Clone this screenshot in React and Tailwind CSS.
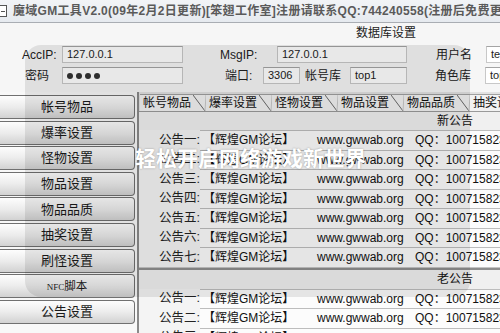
import React from "react";

const F = "font-['Liberation_Sans','Noto_Sans_CJK_SC',sans-serif]";

const buttons = ["帐号物品", "爆率设置", "怪物设置", "物品设置", "物品品质", "抽奖设置", "刷怪设置", "NPC", "公告设置"];
const tabs = ["帐号物品", "爆率设置", "怪物设置", "物品设置", "物品品质", "抽奖设置"];
const nums = ["一", "二", "三", "四", "五", "六", "七"];

function Input({ w, children, cls = "" }) {
  return (
    <div className={`h-[17px] shrink-0 bg-white border border-[#c8c8c8] border-t-[#a4a4a4] flex items-center pl-[4px] text-[11px] text-[#222] overflow-hidden whitespace-nowrap ${cls}`} style={{ width: w }}>
      {children}
    </div>
  );
}

function Row({ n }) {
  return (
    <div className="h-[19.5px] flex shrink-0">
      <div className="w-[61px] shrink-0 bg-[#f4f4f4] flex items-center justify-end text-[12.5px] text-[#222] leading-none">公告{n}:</div>
      <div className="flex-1 bg-[#fcfcfc] border-t border-[#bdbdbd] flex items-center pl-[3px] text-[12px] text-[#111] whitespace-nowrap overflow-hidden">
        <span className="w-[114px] shrink-0">【辉煌GM论坛】</span>
        <span className="w-[98px] shrink-0">www.gwwab.org</span>
        <span className="shrink-0">QQ：1007158236</span>
      </div>
    </div>
  );
}

export default function App() {
  return (
    <div className={`w-[500px] h-[333px] overflow-hidden relative bg-[#f6f6f6] ${F}`}>
      {/* title bar */}
      <div className="h-[23px] bg-linear-to-b from-[#f2f4f7] to-[#e6eaef] border-b border-[#a9adb3] flex items-center whitespace-nowrap overflow-hidden">
        <div className="w-[9px] h-[12px] ml-[-2px] border border-[#555] bg-white flex items-center justify-center shrink-0">
          <div className="w-[4px] h-[1px] bg-[#555]" />
        </div>
        <span className="ml-[6px] text-[12px] font-bold text-[#5a5a5a] tracking-[0.3px]">魔域GM工具V2.0(09年2月2日更新)[笨翅工作室]注册请联系QQ:744240558(注册后免费更新</span>
      </div>

      {/* database settings */}
      <div className="h-[69px] flex flex-col text-[12px] text-[#222]">
        <div className="h-[19px] flex items-center pl-[356px] text-[12px]">数据库设置</div>
        <div className="mt-[4px] h-[17px] flex items-center whitespace-nowrap">
          <span className="ml-[22px] w-[40px] shrink-0">AccIP:</span>
          <Input w={121}>127.0.0.1</Input>
          <span className="ml-[37px] w-[57px] shrink-0">MsgIP:</span>
          <Input w={130}>127.0.0.1</Input>
          <span className="ml-[29px] w-[50px] shrink-0">用户名</span>
          <Input w={40}>test</Input>
        </div>
        <div className="mt-[4px] h-[17px] flex items-center whitespace-nowrap">
          <span className="ml-[25px] w-[37px] shrink-0">密码</span>
          <Input w={121}>
            <span className="flex gap-[3px]">
              {[0, 1, 2, 3].map((i) => (
                <span key={i} className="w-[6px] h-[6px] rounded-full bg-[#333]" />
              ))}
            </span>
          </Input>
          <span className="ml-[42px] w-[38px] shrink-0">端口:</span>
          <Input w={37}>3306</Input>
          <span className="ml-[5px] w-[45px] shrink-0">帐号库</span>
          <Input w={57}>top1</Input>
          <span className="ml-[28px] w-[50px] shrink-0">角色库</span>
          <Input w={40}>top1</Input>
        </div>
      </div>

      {/* main */}
      <div className="h-[241px] flex">
        {/* sidebar */}
        <div className="w-[137px] shrink-0 flex flex-col pt-[3px] gap-[1.6px] bg-[#f8f8f8]">
          {buttons.map((b) => (
            <div key={b} className="h-[24px] w-[135px] shrink-0 border border-l-0 border-[#707070] rounded-r-[4px] bg-linear-to-b from-[#fdfdfd] via-[#ececec] to-[#d2d2d2] flex items-center justify-center text-[13px] text-[#1a1a1a]">
              {b === "NPC" ? (
                <span className="flex items-baseline">
                  <span className="font-['Liberation_Serif',serif] text-[9px]">NFC</span>
                  <span className="text-[11.5px]">脚本</span>
                </span>
              ) : (
                b
              )}
            </div>
          ))}
        </div>

        {/* content */}
        <div className="flex-1 flex flex-col border-l-[2px] border-[#8a8a8a] min-w-0">
          <div className="h-[19px] shrink-0 bg-[#e2e2e2] flex items-end pl-[1px] overflow-hidden">
            {tabs.map((t) => (
              <div key={t} className="w-[66px] h-[17px] shrink-0 flex bg-[#f2f2f2] border-t border-[#a0a0a0]">
                <span className="w-[53px] pl-[3px] shrink-0 text-[12px] leading-[16px] text-[#111] whitespace-nowrap overflow-hidden">{t}</span>
                <svg width="13" height="16" viewBox="0 0 13 16" className="shrink-0">
                  <path d="M0 0 L12 16" stroke="#6a6a6a" strokeWidth="1" fill="none" />
                  <path d="M12 16 L13 0" stroke="#c8c8c8" strokeWidth="1" fill="none" />
                </svg>
              </div>
            ))}
          </div>
          <div className="flex-1 flex flex-col overflow-hidden border-t border-[#9a9a9a]">
            <div className="h-[18px] shrink-0 bg-[#f0f0f0] flex items-center justify-end pr-[27px] text-[12px] text-[#111]">新公告</div>
            {nums.map((n) => (
              <Row key={"a" + n} n={n} />
            ))}
            <div className="h-[3px] shrink-0 bg-[#8e8e8e] border-t border-[#c4c4c4]" />
            <div className="h-[19px] shrink-0 bg-[#f0f0f0] flex items-center justify-end pr-[27px] text-[12px] text-[#111]">老公告</div>
            {nums.slice(0, 3).map((n) => (
              <Row key={"b" + n} n={n} />
            ))}
          </div>
        </div>
      </div>

      {/* watermark overlay */}
      <div className="absolute left-[25px] top-[45px] w-[445px] h-[252px] rounded-[16px] bg-black/[0.09] pointer-events-none" />
      <div className="absolute left-[135px] top-[147px] text-[21px] leading-[24px] font-bold text-white whitespace-nowrap pointer-events-none [text-shadow:0_0_2px_rgba(0,0,0,0.35)]">
        轻松开启网络游戏新世界
      </div>
    </div>
  );
}
